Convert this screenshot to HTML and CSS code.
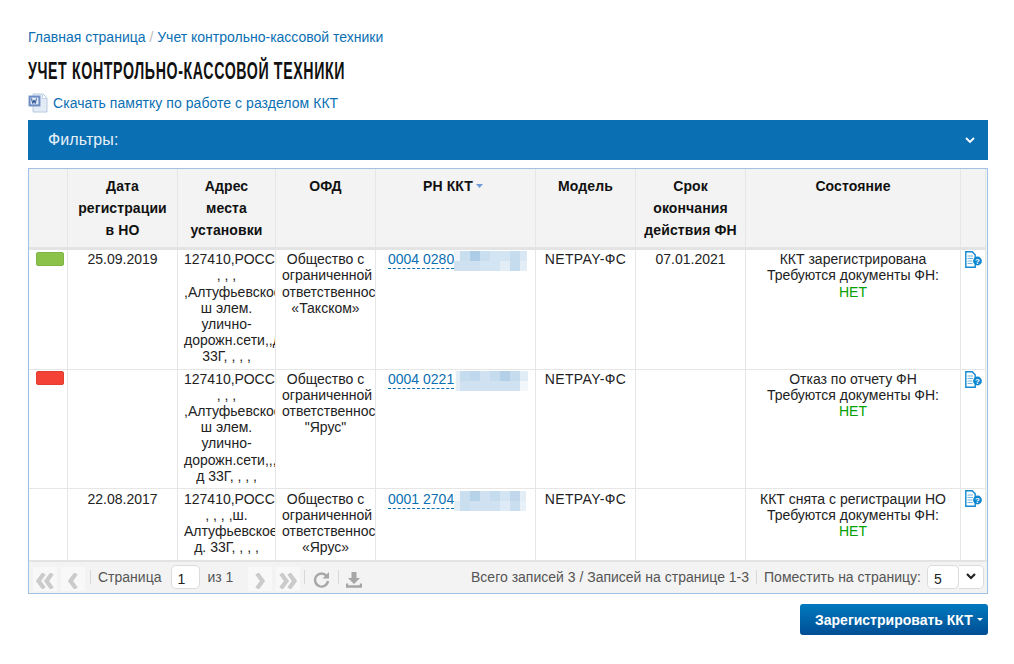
FILE: index.html
```html
<!DOCTYPE html>
<html lang="ru">
<head>
<meta charset="utf-8">
<title>Учет контрольно-кассовой техники</title>
<link rel="stylesheet" href="styles.css">
</head>
<body>
<nav class="crumbs"><a href="#">Главная страница</a> <span class="sep">/</span> <a href="#">Учет контрольно-кассовой техники</a></nav>
<h1 class="title">Учет контрольно-кассовой техники</h1>
<div class="memo">
  <svg class="memo-ic" width="21" height="20" viewBox="0 0 21 20"><path d="M5 1h10l4 4v14H5z" fill="#e3ecf6" stroke="#b9cbe0"/><path d="M14.500 1.500v4h4" fill="#fff" stroke="#c3d3e6"/><rect x="1" y="3" width="11" height="10" fill="#5b7fbd" stroke="#7f9ccb"/><rect x="2.500" y="4.500" width="8" height="7" fill="#dfe8f5"/><path d="M3.500 5.500l1.300 5 1.200-3.500 1.200 3.500 1.300-5" fill="none" stroke="#2f5597" stroke-width="1"/></svg>
  <a href="#">Скачать памятку по работе с разделом ККТ</a>
</div>
<div class="filters"><span>Фильтры:</span>
  <svg width="10" height="7" viewBox="0 0 10 7"><path d="M1 1l4 4 4-4" fill="none" stroke="#fff" stroke-width="1.800"/></svg>
</div>
<section class="grid">
  <table class="tbl">
    <colgroup><col class="c1"><col class="c2"><col class="c3"><col class="c4"><col class="c5"><col class="c6"><col class="c7"><col class="c8"><col class="c9"></colgroup>
    <thead>
      <tr><th></th><th>Дата регистрации в&nbsp;НО</th><th>Адрес места установки</th><th>ОФД</th><th>РН ККТ<svg class="sort" width="9" height="4" viewBox="0 0 9 4"><path d="M1 0h7L4.500 4z" fill="#6f9bd6"/></svg></th><th>Модель</th><th>Срок окончания действия&nbsp;ФН</th><th>Состояние</th><th></th></tr>
    </thead>
    <tbody>
      <tr>
        <td class="flag"><i class="bar green"></i></td>
        <td>25.09.2019</td>
        <td>127410,РОССИЯ, , , , ,Алтуфьевское ш элем. улично-дорожн.сети,,д 33Г, , , ,</td>
        <td>Общество с ограниченной ответственностью «Такском»</td>
        <td class="rn"><div class="rn-in"><a href="#">0004 0280</a>
          <svg class="mosaic" width="73" height="20" viewBox="0 0 73 20" shape-rendering="crispEdges"><rect width="73" height="20" fill="#d3e4f2"/><rect width="6" height="10" fill="#eef4f9"/><rect x="6" width="10" height="10" fill="#c9deef"/><rect x="16" width="10" height="10" fill="#adcde6"/><rect x="26" width="10" height="10" fill="#c9deef"/><rect x="56" width="10" height="10" fill="#c5dbee"/><rect x="66" width="7" height="10" fill="#d8e7f3"/><rect x="0" y="10" width="26" height="10" fill="#cfe1f1"/><rect x="46" y="10" width="10" height="10" fill="#e2edf6"/><rect x="56" y="10" width="10" height="10" fill="#c5dbee"/><rect x="66" y="10" width="7" height="10" fill="#e2edf6"/></svg></div></td>
        <td class="model">NETPAY-ФС</td>
        <td>07.01.2021</td>
        <td>ККТ зарегистрирована<br>Требуются документы ФН:<br><span class="no">НЕТ</span></td>
        <td class="act"><svg width="18" height="17" viewBox="0 0 18 17"><path d="M.8.8h6.400l3 3v12.400h-9.400z" fill="#fff" stroke="#1289d0" stroke-width="1.400"/><path d="M2.500 5h5.500M2.500 7.500h5.500M2.500 10h5M2.500 12.500h5" stroke="#6fb4e3"/><circle cx="12.500" cy="10" r="4.400" fill="#0b85cf"/><text x="12.500" y="13" class="qm">?</text></svg></td>
      </tr>
      <tr>
        <td class="flag"><i class="bar red"></i></td>
        <td></td>
        <td>127410,РОССИЯ, , , , ,Алтуфьевское ш элем. улично-дорожн.сети,,, д 33Г, , , ,</td>
        <td>Общество с ограниченной ответственностью "Ярус"</td>
        <td class="rn"><div class="rn-in"><a href="#">0004 0221</a>
          <svg class="mosaic" width="74" height="20" viewBox="0 0 74 20" shape-rendering="crispEdges"><rect x="2" width="72" height="20" fill="#d0e2f1"/><rect x="2" width="4" height="10" fill="#e2edf6"/><rect x="6" width="10" height="10" fill="#c5dbee"/><rect x="16" width="10" height="10" fill="#bfd8ed"/><rect x="36" width="10" height="10" fill="#c5dbee"/><rect x="46" width="10" height="10" fill="#b3d0e8"/><rect x="56" width="10" height="10" fill="#c5dbee"/><rect x="66" width="8" height="10" fill="#e0ecf6"/><rect x="2" y="10" width="4" height="10" fill="#e2edf6"/><rect x="66" y="10" width="8" height="10" fill="#f2f7fb"/></svg></div></td>
        <td class="model">NETPAY-ФС</td>
        <td></td>
        <td>Отказ по отчету ФН<br>Требуются документы ФН:<br><span class="no">НЕТ</span></td>
        <td class="act"><svg width="18" height="17" viewBox="0 0 18 17"><path d="M.8.8h6.400l3 3v12.400h-9.400z" fill="#fff" stroke="#1289d0" stroke-width="1.400"/><path d="M2.500 5h5.500M2.500 7.500h5.500M2.500 10h5M2.500 12.500h5" stroke="#6fb4e3"/><circle cx="12.500" cy="10" r="4.400" fill="#0b85cf"/><text x="12.500" y="13" class="qm">?</text></svg></td>
      </tr>
      <tr>
        <td class="flag"></td>
        <td>22.08.2017</td>
        <td>127410,РОССИЯ, , , , ,ш. Алтуфьевское, д. 33Г, , , ,</td>
        <td>Общество с ограниченной ответственностью «Ярус»</td>
        <td class="rn"><div class="rn-in"><a href="#">0001 2704</a>
          <svg class="mosaic" width="72" height="20" viewBox="0 0 72 20" shape-rendering="crispEdges"><rect width="72" height="20" fill="#d0e2f1"/><rect width="6" height="10" fill="#f4f8fb"/><rect x="6" width="10" height="10" fill="#c9deef"/><rect x="16" width="10" height="10" fill="#b5d2e9"/><rect x="36" width="10" height="10" fill="#c5dbee"/><rect x="46" width="10" height="10" fill="#d3e4f2"/><rect x="56" width="10" height="10" fill="#c0d7ec"/><rect x="66" width="6" height="10" fill="#e2edf6"/><rect y="10" width="6" height="10" fill="#e2edf6"/><rect x="6" y="10" width="10" height="10" fill="#c9deef"/><rect x="46" y="10" width="10" height="10" fill="#deeaf5"/><rect x="56" y="10" width="10" height="10" fill="#c9deef"/><rect x="66" y="10" width="6" height="10" fill="#e9f1f8"/></svg></div></td>
        <td class="model">NETPAY-ФС</td>
        <td></td>
        <td>ККТ снята с регистрации НО<br>Требуются документы ФН:<br><span class="no">НЕТ</span></td>
        <td class="act"><svg width="18" height="17" viewBox="0 0 18 17"><path d="M.8.8h6.400l3 3v12.400h-9.400z" fill="#fff" stroke="#1289d0" stroke-width="1.400"/><path d="M2.500 5h5.500M2.500 7.500h5.500M2.500 10h5M2.500 12.500h5" stroke="#6fb4e3"/><circle cx="12.500" cy="10" r="4.400" fill="#0b85cf"/><text x="12.500" y="13" class="qm">?</text></svg></td>
      </tr>
    </tbody>
  </table>
  <div class="pager">
    <span class="pbtn"><svg width="18" height="16" viewBox="0 0 18 16"><path d="M8 .5L2.500 8 8 15.500M16 .5L10.500 8l5.500 7.500" fill="none" stroke="#cbcbcb" stroke-width="4.200"/></svg></span>
    <span class="pbtn prev"><svg width="10" height="16" viewBox="0 0 10 16"><path d="M8 .5L2.500 8 8 15.500" fill="none" stroke="#cbcbcb" stroke-width="4.200"/></svg></span>
    <span class="psep"></span>
    <span class="ptext">Страница</span>
    <span class="pinput page">1</span>
    <span class="ptext">из 1</span>
    <span class="pbtn next"><svg width="10" height="16" viewBox="0 0 10 16"><path d="M2 .5L7.500 8 2 15.500" fill="none" stroke="#cbcbcb" stroke-width="4.200"/></svg></span>
    <span class="pbtn"><svg width="18" height="16" viewBox="0 0 18 16"><path d="M2 .5L7.500 8 2 15.500M10 .5L15.500 8 10 15.500" fill="none" stroke="#cbcbcb" stroke-width="4.200"/></svg></span>
    <span class="psep"></span>
    <svg class="pic reload" width="17" height="17" viewBox="0 0 17 17"><path d="M14 5.500A6.500 6.500 0 1 0 15 10" fill="none" stroke="#a6a6a6" stroke-width="2.400"/><path d="M16 1v6.500H9.500z" fill="#a6a6a6"/></svg>
    <span class="psep"></span>
    <svg class="pic" width="16" height="17" viewBox="0 0 16 17"><path d="M5.500 1h5v6H14l-6 6-6-6h3.500z" fill="#a6a6a6"/><path d="M1 12.500V15.500H15V12.500" fill="none" stroke="#a6a6a6" stroke-width="2.400"/></svg>
    <span class="pspace"></span>
    <span class="ptext">Всего записей 3 / Записей на странице 1-3</span>
    <span class="psep"></span>
    <span class="ptext perpage">Поместить на страницу:</span>
    <span class="pselect"><span class="pinput size">5</span><span class="pdrop"><svg width="10" height="7" viewBox="0 0 10 7"><path d="M1 1l4 4 4-4" fill="none" stroke="#222" stroke-width="2.200"/></svg></span></span>
  </div>
</section>
<div class="actions"><button class="primary" type="button">Зарегистрировать ККТ<i class="caret"></i></button></div>
</body>
</html>
```

FILE: styles.css
```css
* { box-sizing: border-box; }
html, body { margin: 0; }
body {
  padding: 29px 26px 0 28px;
  font: 14px/16px "Liberation Sans", Arial, sans-serif;
  color: #222;
  background: #fff;
}
a { color: #0b6fb3; text-decoration: none; }
.crumbs { height: 16px; }
.crumbs .sep { color: #bbb; }
.title {
  margin: 13px 0 0;
  height: 26px;
  font: 700 23px/26px "Liberation Sans", sans-serif;
  letter-spacing: 1px;
  text-transform: uppercase;
  color: #111;
  white-space: nowrap;
  transform: scaleX(.617);
  transform-origin: left center;
}
.memo { display: flex; align-items: center; gap: 4px; height: 20px; margin-top: 9px; }
.memo a { letter-spacing: .05px; }
.memo-ic { flex: none; }
.filters {
  display: flex;
  align-items: center;
  justify-content: space-between;
  height: 40px;
  margin-top: 7px;
  padding: 0 13px 0 20px;
  background: #0b6fb3;
  color: #e8f1f8;
  font-size: 16px;
  letter-spacing: .1px;
}
.grid {
  margin-top: 8px;
  height: 426px;
  overflow: hidden;
  border: 1px solid #a3c0e6;
  background: #f3f3f3;
}
.tbl {
  table-layout: fixed;
  border-collapse: separate;
  border-spacing: 0;
  width: 957px;
  background: #fff;
}
.c1 { width: 39px; } .c2 { width: 110px; } .c3 { width: 98px; } .c4 { width: 100px; }
.c5 { width: 160px; } .c6 { width: 100px; } .c7 { width: 110px; } .c8 { width: 215px; } .c9 { width: 25px; }
.tbl th {
  height: 81px;
  padding: 6px;
  vertical-align: top;
  font-weight: 700;
  line-height: 22px;
  letter-spacing: .1px;
  color: #111;
  background: #f3f3f3;
  border-right: 1px solid #e6e6e6;
  border-bottom: 3px solid #e3e3e3;
}
.sort { margin: 0 4px 0 2px; vertical-align: 3px; }
.tbl td {
  padding: 1.4px 6px 4.6px;
  vertical-align: top;
  text-align: center;
  line-height: 16.1px;
  overflow: hidden;
  color: #222;
  border-right: 1px solid #e6e6e6;
  border-bottom: 1px solid #e6e6e6;
}
.tbl tbody tr:last-child td { border-bottom: 0; }
.tbl td.flag { padding: 1.6px 3px 0 7px; }
.bar { display: block; width: 28px; height: 14px; border-radius: 2px; }
.green { background: #8bc34a; border: 1px solid #80b545; }
.red { background: #f44336; border: 1px solid #e23d31; }
.tbl td.rn { padding: 1.4px 0 0 12px; overflow: visible; }
.rn-in { display: flex; align-items: flex-start; }
.rn-in a { border-bottom: 1px dashed #0b6fb3; height: 18px; flex: none; }
.mosaic { flex: none; }
.tbl td.model { letter-spacing: .4px; }
.tbl td.act { padding: 1px 0 0 4px; text-align: left; }
.no { color: #00a000; }
.qm { font: 700 8px "Liberation Sans", sans-serif; fill: #fff; text-anchor: middle; }
.pager {
  display: flex;
  align-items: center;
  gap: 7px;
  height: 32px;
  padding: 0 3px 0 4px;
  color: #555;
  border-top: 2px solid #e3e3e3;
}
.pbtn {
  display: flex;
  align-items: center;
  justify-content: center;
  width: 24px;
  height: 24px;
  margin: 4px -3px 0 0;
  padding-top: 4px;
  background: #f8f8f8;
}
.prev { margin-right: -2px; }
.next { margin-left: 8px; }
.psep { width: 1px; height: 14px; background: #d8d8d8; }
.ptext { white-space: nowrap; }
.perpage { margin-right: -1px; }
.pinput {
  display: block;
  height: 24px;
  padding: 5px 0 0 5px;
  color: #222;
  background: #fff;
  border: 1px solid #dcdcdc;
  border-radius: 5px;
}
.page { width: 29px; margin: 0 0 0 3px; }
.size { width: 32px; padding-left: 6px; }
.pic { flex: none; margin-top: 5px; }
.reload { margin-left: 1px; margin-right: 1px; }
.pspace { flex: 1; }
.pselect { display: flex; }
.pdrop {
  display: flex;
  align-items: center;
  justify-content: center;
  width: 25px;
  height: 24px;
  background: #fff;
  border: 1px solid #dcdcdc;
  border-left: 0;
  border-radius: 0 5px 5px 0;
}
.actions { display: flex; justify-content: flex-end; margin-top: 10px; }
.primary {
  display: flex;
  align-items: center;
  width: 188px;
  height: 31px;
  padding: 0 0 0 15px;
  font: 700 14px "Liberation Sans", sans-serif;
  color: #fff;
  background: linear-gradient(#0079bf, #004e93);
  border: 0;
  border-radius: 3px;
}
.caret {
  width: 0;
  height: 0;
  margin-left: 4px;
  border: 3px solid transparent;
  border-top-color: #fff;
  border-bottom: 0;
}
```
